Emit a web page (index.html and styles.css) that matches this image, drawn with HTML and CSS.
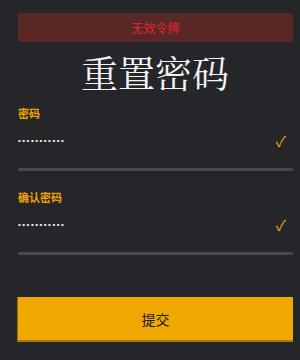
FILE: index.html
```html
<!DOCTYPE html>
<html>
	<head>
		<title>重置密码</title>
		<link rel="stylesheet" href="styles.css">
	</head>
	<body>
		<div class="page">
			<div class="alert">无效令牌</div>
			<h1 class="title">重置密码</h1>
			<form class="form">
				<div class="field">
					<label class="label">密码</label>
					<div class="row">
						<input class="input" type="password" value="aaaaaaaaaaa">
						<span class="check">✓</span>
					</div>
				</div>
				<div class="field">
					<label class="label">确认密码</label>
					<div class="row">
						<input class="input" type="password" value="aaaaaaaaaaa">
						<span class="check">✓</span>
					</div>
				</div>
				<button class="submit" type="button">提交</button>
			</form>
		</div>
	</body>
</html>
```
FILE: styles.css
```css
html, body {
	margin: 0;
	background: #252629;
}

body {
	font-family: "Noto Sans CJK SC", "Noto Sans", sans-serif;
}

.page {
	padding: 13px 7px 0 17px;
}

.alert {
	margin-left: 1px;
	height: 29px;
	line-height: 29px;
	background: #5a2727;
	color: #e4262a;
	font-size: 12px;
	text-align: center;
	border-radius: 3px;
}

.title {
	margin: 6px 0 0;
	color: #f4f4f4;
	font-family: "Noto Serif CJK SC", serif;
	font-size: 37px;
	font-weight: normal;
	line-height: 48px;
	text-align: center;
}

.form {
	margin-left: 1px;
}

.field {
	margin-top: 10px;
	border-bottom: 3px solid #48494d;
}

.field + .field {
	margin-top: 19px;
}

.label {
	display: block;
	color: #f0a500;
	font-size: 11px;
	font-weight: bold;
	line-height: 14px;
}

.row {
	display: flex;
	align-items: center;
	height: 40px;
	padding-bottom: 8px;
}

.input {
	flex: 1;
	min-width: 0;
	padding: 0;
	border: none;
	outline: none;
	background: transparent;
	color: #f4f4f4;
	font-size: 8px;
	letter-spacing: 1.5px;
}

.check {
	margin-right: 7px;
	color: #f0a500;
	font-size: 15px;
}

.submit {
	display: block;
	width: calc(100% + 1px);
	height: 45px;
	margin: 42px 0 0 -1px;
	background: #f0a800;
	border: none;
	border-left: 1px solid #9a6e10;
	border-bottom: 2px solid #a87a10;
	color: #1a1a1a;
	font-family: inherit;
	font-size: 14px;
}
```
